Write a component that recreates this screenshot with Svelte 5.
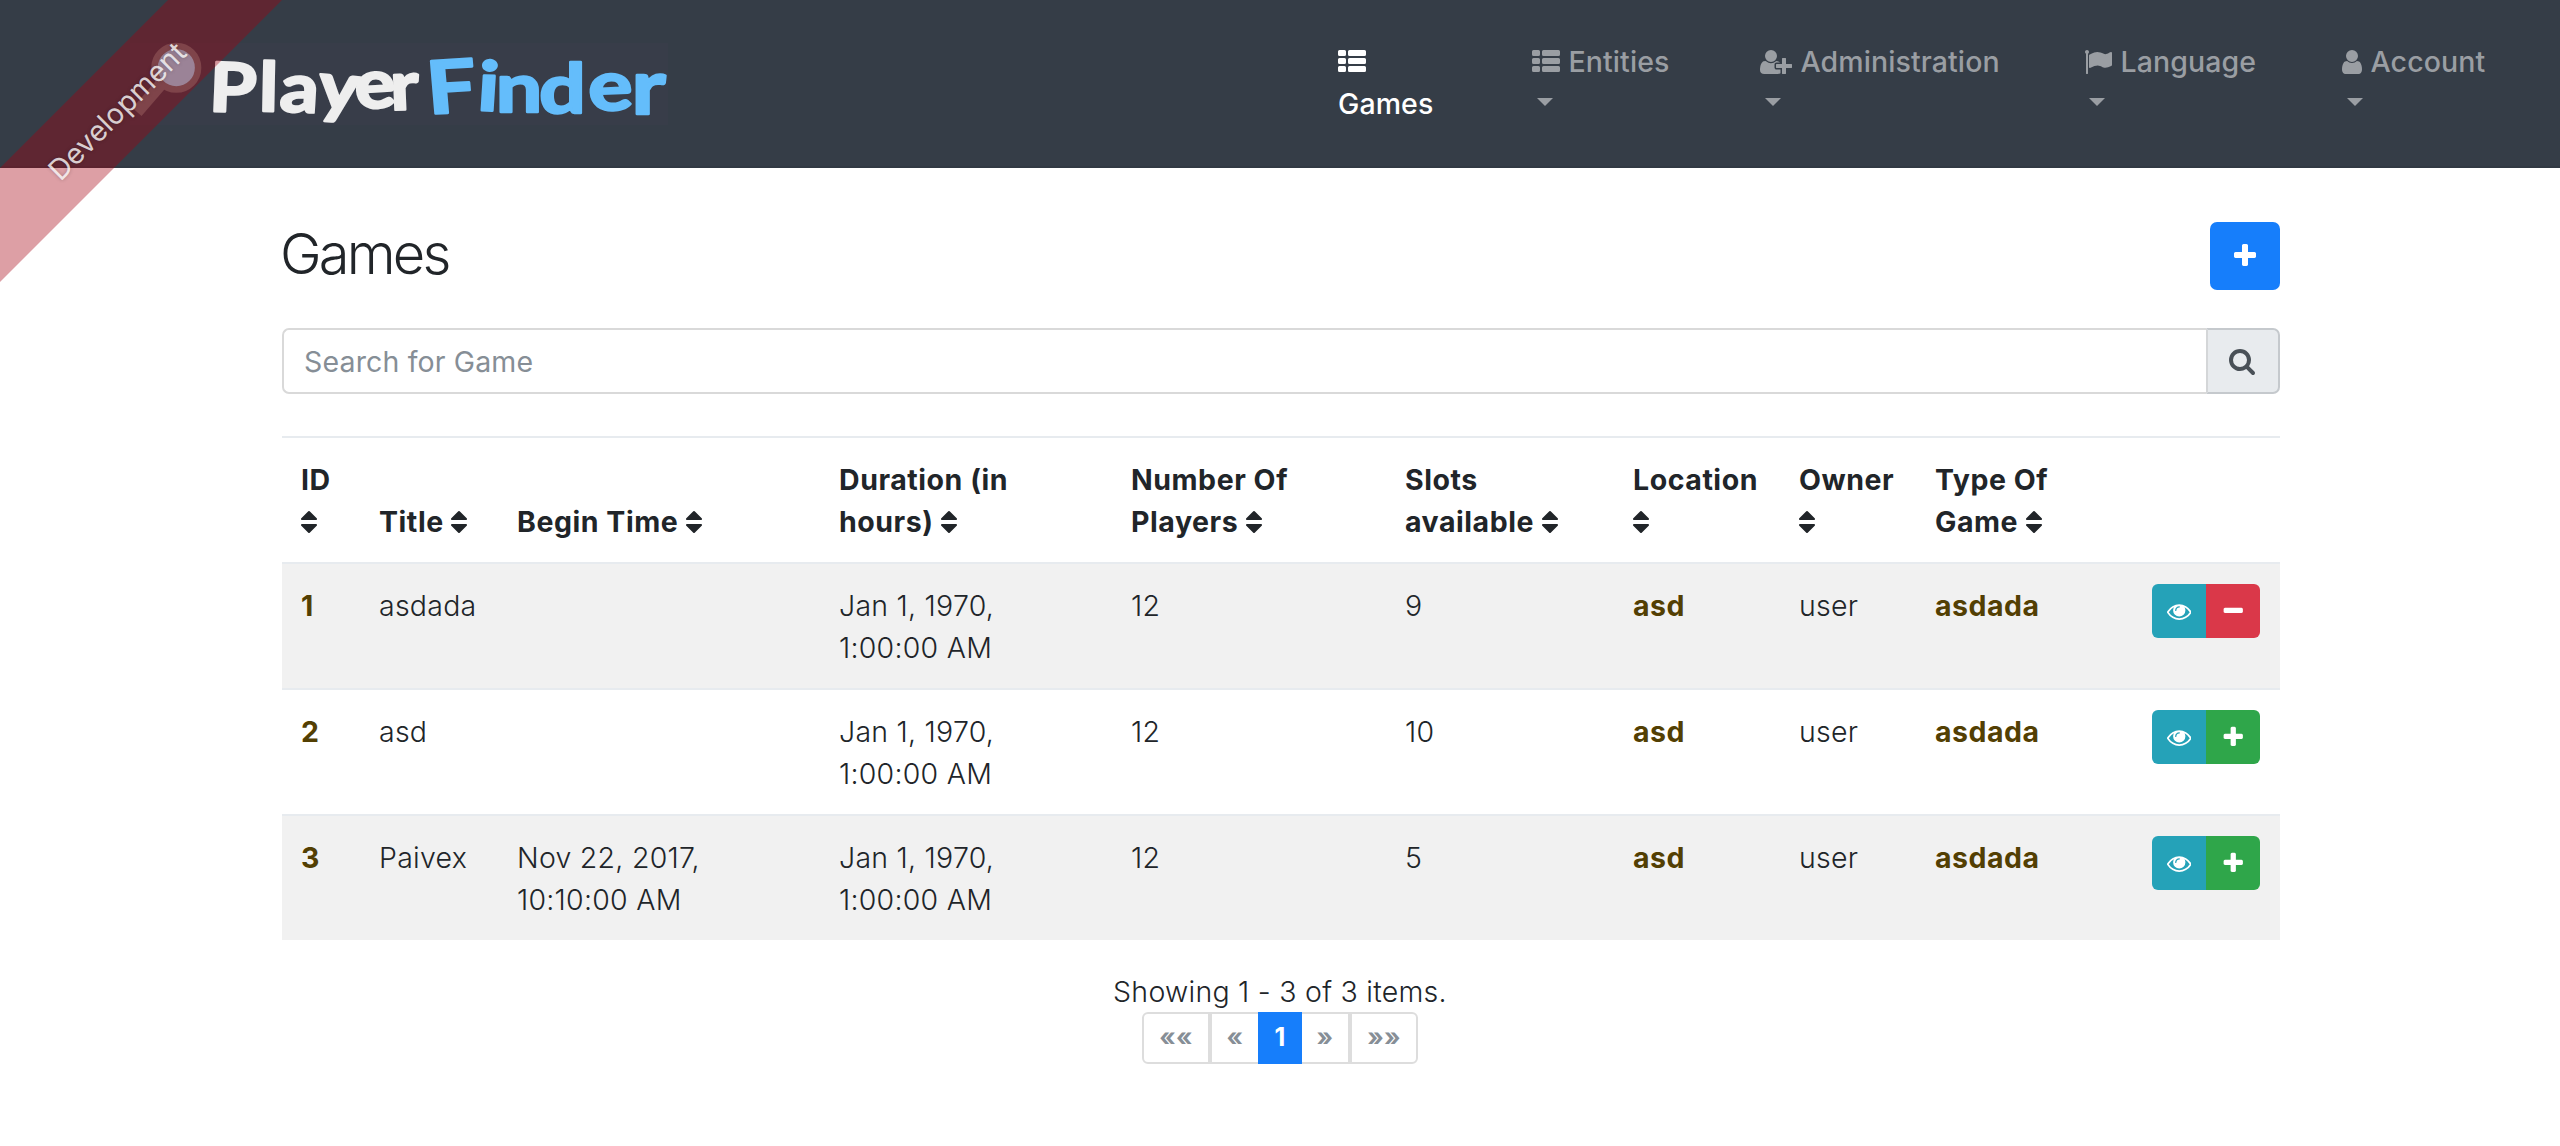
<script>
  const icons = {
    list: { box: '0 0 1792 1792', w: 28, d: 'M96 128h320q96 0 96 96v192q0 96-96 96h-320q-96 0-96-96v-192q0-96 96-96zM96 640h320q96 0 96 96v192q0 96-96 96h-320q-96 0-96-96v-192q0-96 96-96zM96 1152h320q96 0 96 96v192q0 96-96 96h-320q-96 0-96-96v-192q0-96 96-96zM736 128h960q96 0 96 96v192q0 96-96 96h-960q-96 0-96-96v-192q0-96 96-96zM736 640h960q96 0 96 96v192q0 96-96 96h-960q-96 0-96-96v-192q0-96 96-96zM736 1152h960q96 0 96 96v192q0 96-96 96h-960q-96 0-96-96v-192q0-96 96-96z' },
    userPlus: { box: '0 0 2048 1792', w: 32, d: 'M704 896q-159 0-271.5-112.5t-112.5-271.5 112.5-271.5 271.5-112.5 271.5 112.5 112.5 271.5-112.5 271.5-271.5 112.5zm960 128h352q13 0 22.5 9.5t9.5 22.5v192q0 13-9.5 22.5t-22.5 9.5h-352v352q0 13-9.5 22.5t-22.5 9.5h-192q-13 0-22.5-9.5t-9.5-22.5v-352h-352q-13 0-22.5-9.5t-9.5-22.5v-192q0-13 9.5-22.5t22.5-9.5h352v-352q0-13 9.5-22.5t22.5-9.5h192q13 0 22.5 9.5t9.5 22.5v352zm-736 224q0 52 38 90t90 38h256v238q-68 50-171 50h-874q-121 0-194-69t-73-190q0-53 3.5-103.5t14-109 26.5-108.5 43-97.5 62-81 85.5-53.5 111.5-20q19 0 39 17 79 61 154.5 91.5t164.5 30.5 164.5-30.5 154.5-91.5q20-17 39-17 132 0 217 96h-223q-52 0-90 38t-38 90v192z' },
    flag: { box: '0 0 1792 1792', w: 28, d: 'M320 256q0 72-64 110v1266q0 13-9.5 22.5t-22.5 9.5h-64q-13 0-22.5-9.5t-9.5-22.5v-1266q-64-38-64-110 0-53 37.5-90.5t90.5-37.5 90.5 37.5 37.5 90.5zm1472 64v763q0 25-12.5 38.5t-39.5 27.5q-215 116-369 116-61 0-123.5-22t-108.5-48-115.5-48-142.5-22q-192 0-464 146-17 9-33 9-26 0-45-19t-19-45v-742q0-32 31-55 21-14 79-43 236-120 421-120 107 0 200 29t219 88q38 19 88 19 54 0 117.5-21t110-47 88-47 54.5-21q26 0 45 19t19 45z' },
    user: { box: '256 0 1280 1792', w: 20, d: 'M1536 1399q0 109-62.5 187t-150.5 78h-854q-88 0-150.5-78t-62.5-187q0-85 8.5-160.5t31.5-152 58.5-131 94-89 134.5-34.5q131 128 313 128t313-128q76 0 134.5 34.5t94 89 58.5 131 31.5 152 8.5 160.5zm-256-887q0 159-112.5 271.5t-271.5 112.5-271.5-112.5-112.5-271.5 112.5-271.5 271.5-112.5 271.5 112.5 112.5 271.5z' },
    plus: 'M1600 736v192q0 40-28 68t-68 28h-416v416q0 40-28 68t-68 28h-192q-40 0-68-28t-28-68v-416h-416q-40 0-68-28t-28-68v-192q0-40 28-68t68-28h416v-416q0-40 28-68t68-28h192q40 0 68 28t28 68v416h416q40 0 68 28t28 68z',
    minus: 'M1600 736v192q0 40-28 68t-68 28h-1216q-40 0-68-28t-28-68v-192q0-40 28-68t68-28h1216q40 0 68 28t28 68z',
    search: 'M1216 832q0-185-131.5-316.5t-316.5-131.5-316.5 131.5-131.5 316.5 131.5 316.5 316.5 131.5 316.5-131.5 131.5-316.5zm512 832q0 52-38 90t-90 38q-54 0-90-38l-343-342q-179 124-399 124-143 0-273.5-55.5t-225-150-150-225-55.5-273.5 55.5-273.5 150-225 225-150 273.5-55.5 273.5 55.5 225 150 150 225 55.5 273.5q0 220-124 399l343 343q37 37 37 90z',
    eye: 'M1664 960q-152-236-381-353 61 104 61 225 0 185-131.5 316.5t-316.5 131.5-316.5-131.5-131.5-316.5q0-121 61-225-229 117-381 353 133 205 333.5 326.5t434.5 121.5 434.5-121.5 333.5-326.5zm-720-384q0-20-14-34t-34-14q-125 0-214.5 89.5t-89.5 214.5q0 20 14 34t34 14 34-14 14-34q0-86 61-147t147-61q20 0 34-14t14-34zm848 384q0 34-20 69-140 230-376.5 368.5t-499.5 138.5-499.5-139-376.5-368q-20-35-20-69t20-69q140-229 376.5-368t499.5-139 499.5 139 376.5 368q20 35 20 69z',
    sort: 'M1408 1088q0 26-19 45l-448 448q-19 19-45 19t-45-19l-448-448q-19-19-19-45t19-45 45-19h896q26 0 45 19t19 45zm0-384q0 26-19 45t-45 19h-896q-26 0-45-19t-19-45 19-45l448-448q19-19 45-19t45 19l448 448q19 19 19 45z'
  };

  const menu = [
    { icon: icons.list, label: 'Entities' },
    { icon: icons.userPlus, label: 'Administration' },
    { icon: icons.flag, label: 'Language' },
    { icon: icons.user, label: 'Account' }
  ];

  const columns = [
    ['ID', ''],
    ['', 'Title'],
    ['', 'Begin Time'],
    ['Duration (in', 'hours)'],
    ['Number Of', 'Players'],
    ['Slots', 'available'],
    ['Location', ''],
    ['Owner', ''],
    ['Type Of', 'Game']
  ];

  const games = [
    { id: 1, title: 'asdada', begin: [], slots: 9, joined: true },
    { id: 2, title: 'asd', begin: [], slots: 10, joined: false },
    { id: 3, title: 'Paivex', begin: ['Nov 22, 2017,', '10:10:00 AM'], slots: 5, joined: false }
  ];
</script>

{#snippet glyph(d)}
  <svg class="glyph" viewBox="0 0 1792 1792"><path {d} /></svg>
{/snippet}

<header class="navbar">
  <svg class="logo" viewBox="0 0 538 82" role="img" aria-label="PlayerFinder">
    <rect class="plate" width="538" height="82" />
    <path class="handle" d="M32 40 L7 69" />
    <circle class="lens" cx="46.3" cy="24.7" r="21.8" />
    <text class="word player" transform="scale(1.12 1)" x="70 115 133 167 202 233" y="68 68 68 66 66 67" rotate="2 1 3 5 -4 -2">Player</text>
    <text class="word finder" transform="scale(1.2 1)" x="249 289 305 341 383 418" y="71 67 69 70 68 71" rotate="-4 3 0 0 -3 0"><tspan class="cap">F</tspan>ind<tspan class="round">e</tspan><tspan class="tall">r</tspan></text>
  </svg>
  <nav class="menu">
    <a class="item active" href="#games">
      <svg class="nav-icon w28" viewBox={icons.list.box}><path d={icons.list.d} /></svg>
      <span>Games</span>
    </a>
    {#each menu as m}
      <a class="item" href="#menu">
        <span class="line"><svg class="nav-icon w{m.icon.w}" viewBox={m.icon.box}><path d={m.icon.d} /></svg>{m.label}</span>
        <span class="caret"></span>
      </a>
    {/each}
  </nav>
</header>

<div class="ribbon"><span>Development</span></div>

<main>
  <div class="heading">
    <h2>Games</h2>
    <button class="add" aria-label="Create">{@render glyph(icons.plus)}</button>
  </div>

  <div class="search">
    <input type="text" placeholder="Search for Game" />
    <button aria-label="Search">{@render glyph(icons.search)}</button>
  </div>

  <table>
    <colgroup>
      {#each [...columns, 'actions'] as _, i}<col class="c{i}" />{/each}
    </colgroup>
    <thead>
      <tr>
        {#each columns as [first, last]}
          <th>
            {#if first}<div>{first}</div>{/if}
            <div class="sorted">{last}<svg class="sort" viewBox="384 0 1024 1792"><path d={icons.sort} /></svg></div>
          </th>
        {/each}
        <th></th>
      </tr>
    </thead>
    <tbody>
      {#each games as g}
        <tr>
          <td><b>{g.id}</b></td>
          <td>{g.title}</td>
          <td>{#each g.begin as part}<div>{part}</div>{/each}</td>
          <td><div>Jan 1, 1970,</div><div>1:00:00 AM</div></td>
          <td>12</td>
          <td>{g.slots}</td>
          <td><b>asd</b></td>
          <td>user</td>
          <td><b>asdada</b></td>
          <td>
            <div class="actions">
              <button class="view" aria-label="View">{@render glyph(icons.eye)}</button>
              <button class={g.joined ? 'leave' : 'join'} aria-label={g.joined ? 'Leave' : 'Join'}>{@render glyph(g.joined ? icons.minus : icons.plus)}</button>
            </div>
          </td>
        </tr>
      {/each}
    </tbody>
  </table>

  <p class="count">Showing 1 - 3 of 3 items.</p>
  <div class="pages">
    <span class="page far">««</span>
    <span class="page near prev">«</span>
    <span class="page current">1</span>
    <span class="page near next">»</span>
    <span class="page far">»»</span>
  </div>
</main>

<style>
  :global(body) {
    margin: 0;
    background: #fff;
    overflow: hidden;
  }
  :global(#app) {
    position: relative;
    font-family: Inter, 'Liberation Sans', sans-serif;
    font-size: 28.5px;
    font-weight: 300;
    line-height: 42px;
    letter-spacing: 0.25px;
    color: #212529;
  }
  * {
    box-sizing: border-box;
  }
  button {
    border: 0;
    padding: 0;
    margin: 0;
    display: flex;
    align-items: center;
    justify-content: center;
  }
  svg {
    fill: currentColor;
  }
  .navbar {
    display: flex;
    align-items: flex-start;
    height: 168px;
    background: #353d47;
    border-bottom: 2px solid #313943;
    padding-left: 130px;
  }
  .logo {
    width: 538px;
    height: 82px;
    margin-top: 43px;
    overflow: visible;
    flex: none;
    letter-spacing: 0;
  }
  .plate {
    fill: #383d49;
  }
  .lens {
    fill: #95d3e8;
    stroke: #686d6d;
    stroke-width: 6.5;
  }
  .handle {
    stroke: #686d6d;
    stroke-width: 12;
  }
  .word {
    font-family: Lato, 'Open Sans', sans-serif;
    font-weight: 700;
    font-size: 68px;
    stroke-width: 2.5;
    stroke-linejoin: round;
  }
  .cap {
    font-size: 73px;
  }
  .tall {
    font-size: 76px;
  }
  .round {
    font-size: 69px;
  }
  .player {
    fill: #eee;
    stroke: #eee;
  }
  .finder {
    fill: #64bdfb;
    stroke: #64bdfb;
  }
  .menu {
    display: grid;
    grid-template-columns: 194px 228px 324px 258px auto;
    margin-left: 670px;
    padding-top: 41px;
    font-weight: 450;
    letter-spacing: 0.1px;
  }
  .item {
    display: flex;
    flex-direction: column;
    align-items: flex-start;
    color: #9a9ea3;
    text-decoration: none;
    white-space: nowrap;
  }
  .item.active {
    color: #fff;
  }
  .line {
    display: flex;
    gap: 8.5px;
  }
  .nav-icon {
    height: 28px;
    margin-top: 7px;
    flex: none;
  }
  .active .nav-icon {
    margin-bottom: 7px;
  }
  .w28 {
    width: 28px;
  }
  .w32 {
    width: 32px;
  }
  .w20 {
    width: 20px;
  }
  .caret {
    margin: 15px 0 0 5px;
    border: 8.5px solid transparent;
    border-top-color: currentColor;
    border-bottom: 0;
  }
  /* diagonal band over the top-left corner */
  .ribbon {
    position: absolute;
    left: 0;
    top: 0;
    width: 282px;
    height: 282px;
    display: flex;
    align-items: center;
    justify-content: center;
    background: rgba(166, 0, 16, 0.375);
    clip-path: polygon(168px 0, 282px 0, 0 282px, 0 168px);
    pointer-events: none;
  }
  .ribbon span {
    color: rgba(255, 255, 255, 0.8);
    font-weight: 400;
    transform: translate(-24px, -30px) rotate(-45deg);
    text-shadow: 0 0 4px rgba(0, 0, 0, 0.25);
  }
  main {
    width: 1998px;
    margin: 0 auto;
    padding: 54px 0 0 2px;
    box-sizing: content-box;
  }
  .heading {
    display: flex;
    justify-content: space-between;
    align-items: flex-start;
    height: 106px;
  }
  h2 {
    margin: 0 0 0 -2px;
    font-size: 56px;
    font-weight: 300;
    line-height: 64px;
    letter-spacing: -2.8px;
  }
  .add {
    width: 70px;
    height: 68px;
    border-radius: 7px;
    background: #167efb;
    color: #fff;
  }
  .glyph {
    width: 28px;
    height: 28px;
  }
  .search {
    display: flex;
    height: 66px;
    margin-bottom: 42px;
  }
  .search input {
    flex: 1;
    border: 2px solid #d9d9d9;
    border-right: 0;
    border-radius: 7px 0 0 7px;
    padding: 2px 20px 0;
    font: inherit;
    font-weight: 400;
    letter-spacing: 0.15px;
    outline: 0;
  }
  .search input::placeholder {
    color: #868e96;
    opacity: 1;
  }
  .search button {
    width: 74px;
    padding-right: 2px;
    border: 2px solid #c5c9cd;
    border-left-color: #d4d6d8;
    border-radius: 0 7px 7px 0;
    background: #e8ebee;
    color: #495057;
  }
  table {
    width: 1998px;
    table-layout: fixed;
    border-collapse: separate;
    border-spacing: 0;
  }
  .c0 { width: 78px; }
  .c1 { width: 138px; }
  .c2 { width: 322px; }
  .c3 { width: 292px; }
  .c4 { width: 274px; }
  .c5 { width: 228px; }
  .c6 { width: 166px; }
  .c7 { width: 136px; }
  .c8 { width: 196px; }
  th,
  td {
    height: 126px;
    padding: 21px 0 19px 19px;
    border-top: 2px solid #e7ebef;
    text-align: left;
    vertical-align: top;
    white-space: nowrap;
  }
  th {
    font-weight: 700;
    letter-spacing: 0.55px;
    vertical-align: bottom;
  }
  .sorted {
    display: flex;
    gap: 7.5px;
    height: 42px;
  }
  .sort {
    width: 16px;
    height: 28px;
    margin-top: 7px;
  }
  tbody tr:nth-child(odd) {
    background: #f1f1f1;
  }
  b {
    color: #533f03;
    font-weight: 700;
    letter-spacing: 0.5px;
  }
  .actions {
    display: flex;
    justify-content: flex-end;
    margin-top: -1px;
    padding-right: 20px;
  }
  .actions button {
    width: 54px;
    height: 54px;
    color: #fff;
  }
  .actions .glyph {
    width: 24.5px;
    height: 24.5px;
  }
  .view {
    background: #25a2b8;
    border-radius: 6px 0 0 6px;
  }
  .leave {
    background: #da3849;
    border-radius: 0 6px 6px 0;
  }
  .join {
    background: #2fa64a;
    border-radius: 0 6px 6px 0;
  }
  .count {
    margin: 31px 0 -1px;
    padding-right: 2px;
    text-align: center;
  }
  .pages {
    display: flex;
    justify-content: center;
    height: 52px;
    padding-right: 2px;
    font-size: 25px;
    font-weight: 700;
    color: #868e96;
  }
  .page {
    display: flex;
    align-items: center;
    justify-content: center;
    border: 2px solid #ddd;
    padding-bottom: 2px;
  }
  .far {
    width: 68px;
  }
  .near {
    width: 48px;
  }
  .prev {
    border-right: 0;
  }
  .next {
    border-left: 0;
  }
  .far:first-child {
    border-radius: 6px 0 0 6px;
  }
  .far:last-child {
    border-radius: 0 6px 6px 0;
  }
  .current {
    width: 44px;
    color: #fff;
    background: #167efb;
    border: 0;
  }
</style>
